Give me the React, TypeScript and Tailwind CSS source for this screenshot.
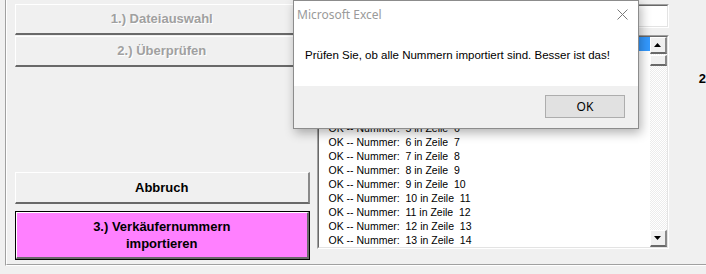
const rows: string[] = [
  'Import gestartet',
  'OK -- Nummer:  0 in Zeile  1',
  'OK -- Nummer:  1 in Zeile  2',
  'OK -- Nummer:  2 in Zeile  3',
  'OK -- Nummer:  3 in Zeile  4',
  'OK -- Nummer:  4 in Zeile  5',
  'OK -- Nummer:  5 in Zeile  6',
  'OK -- Nummer:  6 in Zeile  7',
  'OK -- Nummer:  7 in Zeile  8',
  'OK -- Nummer:  8 in Zeile  9',
  'OK -- Nummer:  9 in Zeile  10',
  'OK -- Nummer:  10 in Zeile  11',
  'OK -- Nummer:  11 in Zeile  12',
  'OK -- Nummer:  12 in Zeile  13',
  'OK -- Nummer:  13 in Zeile  14',
];

function FormButton({ label, disabled }: { label: string; disabled?: boolean }) {
  return (
    <div className="h-[31px] flex items-center justify-center bg-[#f0f0f0] border-t border-l border-t-white border-l-white border-b-2 border-r-2 border-b-[#696969] border-r-[#8a8a8a]">
      <span
        className={
          disabled
            ? 'text-[13px] font-bold text-[#a0a0a0] [text-shadow:1px_1px_0_#fff]'
            : 'text-[13px] font-bold text-black'
        }
      >
        {label}
      </span>
    </div>
  );
}

function ScrollBtn({ up }: { up?: boolean }) {
  return (
    <div className="h-[17px] w-[17px] bg-[#f0f0f0] border-t border-l border-t-white border-l-white border-b-2 border-r-2 border-b-[#696969] border-r-[#8a8a8a] flex items-center justify-center">
      <svg width="7" height="4" viewBox="0 0 7 4">
        {up ? <path d="M3.5 0 L7 4 L0 4 Z" fill="#000" /> : <path d="M0 0 L7 0 L3.5 4 Z" fill="#000" />}
      </svg>
    </div>
  );
}

export default function App() {
  return (
    <div className="relative w-[706px] h-[274px] bg-[#f0f0f0] overflow-hidden font-['Liberation_Sans',Arial,sans-serif]">
      <div className="ml-[5px] h-[266px] border-l border-b border-l-[#a0a0a0] border-b-white">
        <div className="h-full border-l border-b border-l-white border-b-[#a0a0a0] flex pl-[8px] pt-[4px]">
          {/* left buttons */}
          <div className="w-[296px] flex flex-col">
            <FormButton label="1.) Dateiauswahl" disabled />
            <div className="h-[1px]" />
            <FormButton label="2.) Überprüfen" disabled />
            <div className="flex-1" />
            <div className="h-[32px] flex items-center justify-center bg-[#f0f0f0] border-t border-l border-t-white border-l-white border-b-2 border-r-2 border-b-[#696969] border-r-[#8a8a8a]">
              <span className="text-[13px] font-bold text-black">Abbruch</span>
            </div>
            <div className="mt-[7px] mb-[4px] h-[49px] border border-black">
              <div className="h-full bg-[#ff80ff] border-t border-l border-t-white border-l-white border-b-2 border-r-2 border-b-[#696969] border-r-[#696969] flex flex-col items-center justify-center leading-[17px]">
                <span className="text-[13px] font-bold text-black">3.) Verkäufernummern</span>
                <span className="text-[13px] font-bold text-black">importieren</span>
              </div>
            </div>
          </div>

          {/* right column */}
          <div className="ml-[7px] w-[354px] flex flex-col">
            <div className="h-[24px] border border-t-[#a0a0a0] border-l-[#a0a0a0] border-b-white border-r-white">
              <div className="h-full bg-white border border-t-[#696969] border-l-[#696969] border-b-[#e3e3e3] border-r-[#e3e3e3]" />
            </div>
            <div className="mt-[7px] h-[214px] border border-t-[#a0a0a0] border-l-[#a0a0a0] border-b-white border-r-white">
              <div className="h-full bg-white border border-t-[#696969] border-l-[#696969] border-b-[#e3e3e3] border-r-[#e3e3e3] flex overflow-hidden">
                <div className="flex-1 overflow-hidden">
                  {rows.map((r, i) => (
                    <div
                      key={i}
                      className={
                        i === 0
                          ? 'h-[14px] leading-[14px] pl-[10px] text-[10.5px] whitespace-pre bg-[#3399ff] text-white'
                          : 'h-[14px] leading-[14px] pl-[10px] text-[10.5px] whitespace-pre text-black'
                      }
                    >
                      {r}
                    </div>
                  ))}
                </div>
                <div className="w-[17px] flex flex-col bg-[repeating-conic-gradient(#ffffff_0_25%,#ececec_0_50%)] bg-[length:2px_2px]">
                  <ScrollBtn up />
                  <div className="mt-[1px] h-[11px] bg-[#f0f0f0] border-t border-l border-t-white border-l-white border-b-2 border-r-2 border-b-[#696969] border-r-[#8a8a8a]" />
                  <div className="flex-1" />
                  <ScrollBtn />
                </div>
              </div>
            </div>
          </div>

          <div className="ml-[30px] mt-[65px] text-[13px] font-bold text-black whitespace-nowrap">2</div>
        </div>
      </div>

      {/* message box */}
      <div className="absolute left-[293px] top-0 w-[346px] h-[129px] bg-white border border-[#8c8c8c] shadow-[2px_4px_10px_rgba(0,0,0,0.3)] flex flex-col font-['Noto_Sans',sans-serif]">
        <div className="h-[27px] flex items-center justify-between pl-[3px] pr-[10px]">
          <span className="text-[12px] text-[#9a9a9a]">Microsoft Excel</span>
          <svg width="11" height="11" viewBox="0 0 11 11">
            <path d="M0.5 0.5 L10.5 10.5 M10.5 0.5 L0.5 10.5" stroke="#7a7a7a" strokeWidth="1" />
          </svg>
        </div>
        <div className="h-[58px] flex items-center pl-[11px] pb-[2px]">
          <span className="text-[11.5px] text-black whitespace-nowrap font-['Liberation_Sans',Arial,sans-serif]">
            Prüfen Sie, ob alle Nummern importiert sind. Besser ist das!
          </span>
        </div>
        <div className="flex-1 bg-[#f0f0f0] flex justify-end items-start pt-[9px] pr-[13px]">
          <div className="w-[80px] h-[23px] bg-[#e1e1e1] border border-[#adadad] flex items-center justify-center text-[12px] text-black">
            OK
          </div>
        </div>
      </div>
    </div>
  );
}
